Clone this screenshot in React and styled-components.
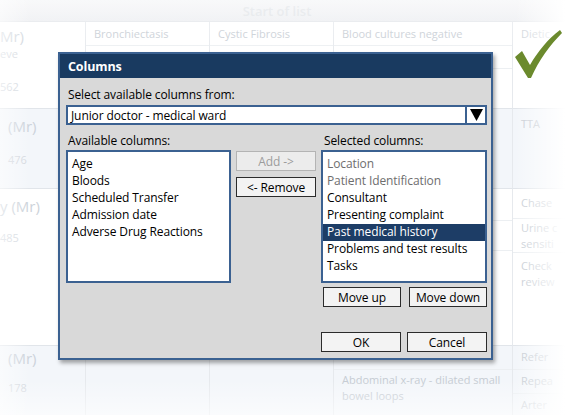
import React from 'react';
import styled, { createGlobalStyle } from 'styled-components';

const GlobalStyle = createGlobalStyle`
  html, body {
    margin: 0;
    padding: 0;
    background: #ffffff;
  }
  body {
    font-family: "Open Sans", "Noto Sans", sans-serif;
  }
`;

const Page = styled.div`
  position: relative;
  width: 578px;
  height: 415px;
  overflow: hidden;
  background: #ffffff;
`;

/* faded list behind the dialog */
const ListHeader = styled.div`
  height: 21px;
  display: flex;
  align-items: center;
  justify-content: center;
  padding-right: 24px;
  background: linear-gradient(#f4f5f7, #eceef1);
  border-bottom: 1px solid #e3e6ea;
  color: #e0e3e7;
  font-size: 13px;
  font-weight: 600;
`;

const Table = styled.div`
  display: grid;
  grid-template-columns: 86px 124px 124px 179px 65px;
`;

const Row = styled.div`
  display: contents;
`;

const Cell = styled.div`
  display: flex;
  flex-direction: column;
  border-right: 1px solid #e6e9ed;
  border-bottom: 1px solid #e1e5ea;
  background: ${(p) => (p.tint ? '#f3f6fa' : '#ffffff')};
  overflow: hidden;
  height: ${(p) => p.h}px;
  box-sizing: border-box;
`;

const Sub = styled.div`
  height: ${(p) => p.h}px;
  flex: ${(p) => (p.h ? 'none' : '1')};
  box-sizing: border-box;
  border-bottom: ${(p) => (p.last ? 'none' : '1px solid #eceff2')};
  padding: ${(p) => p.top ?? 4}px 8px 0;
  color: #c6ccd3;
  font-size: 11px;
  line-height: 16px;
  white-space: nowrap;
`;

const Name = styled.div`
  color: #cdd3da;
  font-size: 15px;
  white-space: nowrap;
  padding: ${(p) => p.top}px 0 0 ${(p) => p.indent || 0}px;
`;

const Small = styled.div`
  color: #d3d8de;
  font-size: 11px;
  padding: ${(p) => p.gap}px 0 0 ${(p) => p.indent || 0}px;
  white-space: nowrap;
`;

const Fade = styled.div`
  position: absolute;
  inset: 0;
  pointer-events: none;
  background:
    linear-gradient(to right, rgba(255, 255, 255, 0.55) 0px, rgba(255, 255, 255, 0) 30px, rgba(255, 255, 255, 0) 515px, #ffffff 565px),
    linear-gradient(to bottom, rgba(255, 255, 255, 0.4) 0px, rgba(255, 255, 255, 0) 60px, rgba(255, 255, 255, 0) 380px, rgba(255, 255, 255, 0.6) 415px);
`;

const Check = styled.svg`
  position: absolute;
  left: 514px;
  top: 30px;
`;

/* dialog */
const Dialog = styled.div`
  position: absolute;
  left: 58px;
  top: 52px;
  width: 435px;
  height: 308px;
  box-sizing: border-box;
  border: 2px solid #3b6191;
  background: #d9d9d9;
  box-shadow: 2px 3px 4px rgba(0, 0, 0, 0.35);
  display: flex;
  flex-direction: column;
  font-size: 12px;
  letter-spacing: -0.1px;
  color: #000;
`;

const TitleBar = styled.div`
  height: 24px;
  background: #193a60;
  color: #ffffff;
  font-weight: 700;
  font-size: 12.5px;
  display: flex;
  align-items: center;
  padding-left: 8px;
`;

const Body = styled.div`
  padding: 8px 4px 0 6px;
  display: flex;
  flex-direction: column;
`;

const Label = styled.div`
  line-height: 17px;
  padding-left: ${(p) => p.indent || 2}px;
`;

const Select = styled.div`
  margin-top: 2px;
  height: 20px;
  box-sizing: border-box;
  border: 2px solid #3b6191;
  background: #ffffff;
  display: flex;
  align-items: center;
`;

const SelectText = styled.div`
  flex: 1;
  padding-left: 3px;
`;

const Arrow = styled.div`
  width: 18px;
  height: 100%;
  border-left: 2px solid #3b6191;
  display: flex;
  align-items: center;
  justify-content: center;
`;

const Grid = styled.div`
  margin-top: 7px;
  display: grid;
  grid-template-columns: 165px 80px 166px;
  column-gap: 5px;
  grid-template-rows: 18px 133px;
`;

const ListBox = styled.div`
  box-sizing: border-box;
  border: 2px solid #3b6191;
  background: #ffffff;
  padding-top: 4px;
`;

const Item = styled.div`
  height: 17px;
  line-height: 16px;
  padding-left: 4px;
  white-space: nowrap;
  color: ${(p) => (p.selected ? '#ffffff' : p.muted ? '#6e6e6e' : '#000000')};
  background: ${(p) => (p.selected ? '#1d3d66' : 'transparent')};
`;

const ButtonStack = styled.div`
  display: flex;
  flex-direction: column;
  gap: 6px;
  padding-top: 1px;
`;

const Button = styled.div`
  height: 20px;
  box-sizing: border-box;
  border: 1px solid ${(p) => (p.disabled ? '#b4b4b4' : '#2b2b2b')};
  background: ${(p) => (p.disabled ? '#ececec' : '#f3f3f3')};
  color: ${(p) => (p.disabled ? '#9c9c9c' : '#000000')};
  display: flex;
  align-items: center;
  justify-content: center;
  width: ${(p) => p.w || 80}px;
`;

const ButtonRow = styled.div`
  display: flex;
  justify-content: flex-end;
  gap: ${(p) => p.gap}px;
  margin-top: ${(p) => p.top}px;
`;

export default function App() {
  return (
    <Page>
      <GlobalStyle />
      <ListHeader>Start of list</ListHeader>
      <Table>
        <Row>
          <Cell h={87}>
            <Name top={4}>Mr)</Name>
            <Small gap={0}>eve</Small>
            <Small gap={18}>562</Small>
          </Cell>
          <Cell h={87}>
            <Sub h={24}>Bronchiectasis</Sub>
            <Sub h={23} />
            <Sub last />
          </Cell>
          <Cell h={87}>
            <Sub h={24}>Cystic Fibrosis</Sub>
            <Sub h={23} />
            <Sub last />
          </Cell>
          <Cell h={87}>
            <Sub h={24}>Blood cultures negative</Sub>
            <Sub h={23} />
            <Sub last />
          </Cell>
          <Cell h={87}>
            <Sub last>Dietic</Sub>
          </Cell>
        </Row>
        <Row>
          <Cell h={80} tint>
            <Name top={7} indent={8}>(Mr)</Name>
            <Small gap={16} indent={8}>476</Small>
          </Cell>
          <Cell h={80} tint />
          <Cell h={80} tint />
          <Cell h={80} tint />
          <Cell h={80} tint>
            <Sub last top={7}>TTA</Sub>
          </Cell>
        </Row>
        <Row>
          <Cell h={157}>
            <Name top={7}>y (Mr)</Name>
            <Small gap={14}>485</Small>
          </Cell>
          <Cell h={157}>
            <Sub h={32} />
            <Sub h={30} />
            <Sub last />
          </Cell>
          <Cell h={157}>
            <Sub h={32} />
            <Sub h={30} />
            <Sub last />
          </Cell>
          <Cell h={157}>
            <Sub h={32} />
            <Sub h={30} />
            <Sub last />
          </Cell>
          <Cell h={157}>
            <Sub h={30} top={6}>Chase</Sub>
            <Sub h={34} top={1}>Urine c<br />sensiti</Sub>
            <Sub last top={5}>Check<br />review</Sub>
          </Cell>
        </Row>
        <Row>
          <Cell h={70} tint>
            <Name top={2} indent={8}>(Mr)</Name>
            <Small gap={12} indent={8}>178</Small>
          </Cell>
          <Cell h={70} tint />
          <Cell h={70} tint />
          <Cell h={70} tint>
            <Sub h={24} />
            <Sub last top={2}>Abdominal x-ray - dilated small<br />bowel loops</Sub>
          </Cell>
          <Cell h={70} tint>
            <Sub h={24} top={3}>Refer</Sub>
            <Sub h={24} top={3}>Repea</Sub>
            <Sub last top={3}>Arter</Sub>
          </Cell>
        </Row>
      </Table>
      <Fade />
      <Check width="48" height="50" viewBox="0 0 48 50">
        <path d="M1 27 L8 21 L16 35 C24 21 34 9 46 0 L48 3 C36 15 25 30 17 48 L14 48 Z" fill="#6b8a2d" />
      </Check>

      <Dialog>
        <TitleBar>Columns</TitleBar>
        <Body>
          <Label>Select available columns from:</Label>
          <Select>
            <SelectText>Junior doctor - medical ward</SelectText>
            <Arrow>
              <svg width="13" height="12" viewBox="0 0 13 12">
                <polygon points="0,0 13,0 6.5,12" fill="#000" />
              </svg>
            </Arrow>
          </Select>
          <Grid>
            <Label>Available columns:</Label>
            <div />
            <Label indent={3}>Selected columns:</Label>
            <ListBox>
              <Item>Age</Item>
              <Item>Bloods</Item>
              <Item>Scheduled Transfer</Item>
              <Item>Admission date</Item>
              <Item>Adverse Drug Reactions</Item>
            </ListBox>
            <ButtonStack>
              <Button disabled>Add -&gt;</Button>
              <Button>&lt;- Remove</Button>
            </ButtonStack>
            <ListBox>
              <Item muted>Location</Item>
              <Item muted>Patient Identification</Item>
              <Item>Consultant</Item>
              <Item>Presenting complaint</Item>
              <Item selected>Past medical history</Item>
              <Item>Problems and test results</Item>
              <Item>Tasks</Item>
            </ListBox>
          </Grid>
          <ButtonRow gap={8} top={4}>
            <Button w={78}>Move up</Button>
            <Button w={78}>Move down</Button>
          </ButtonRow>
          <ButtonRow gap={6} top={25}>
            <Button w={80}>OK</Button>
            <Button w={80}>Cancel</Button>
          </ButtonRow>
        </Body>
      </Dialog>
    </Page>
  );
}
